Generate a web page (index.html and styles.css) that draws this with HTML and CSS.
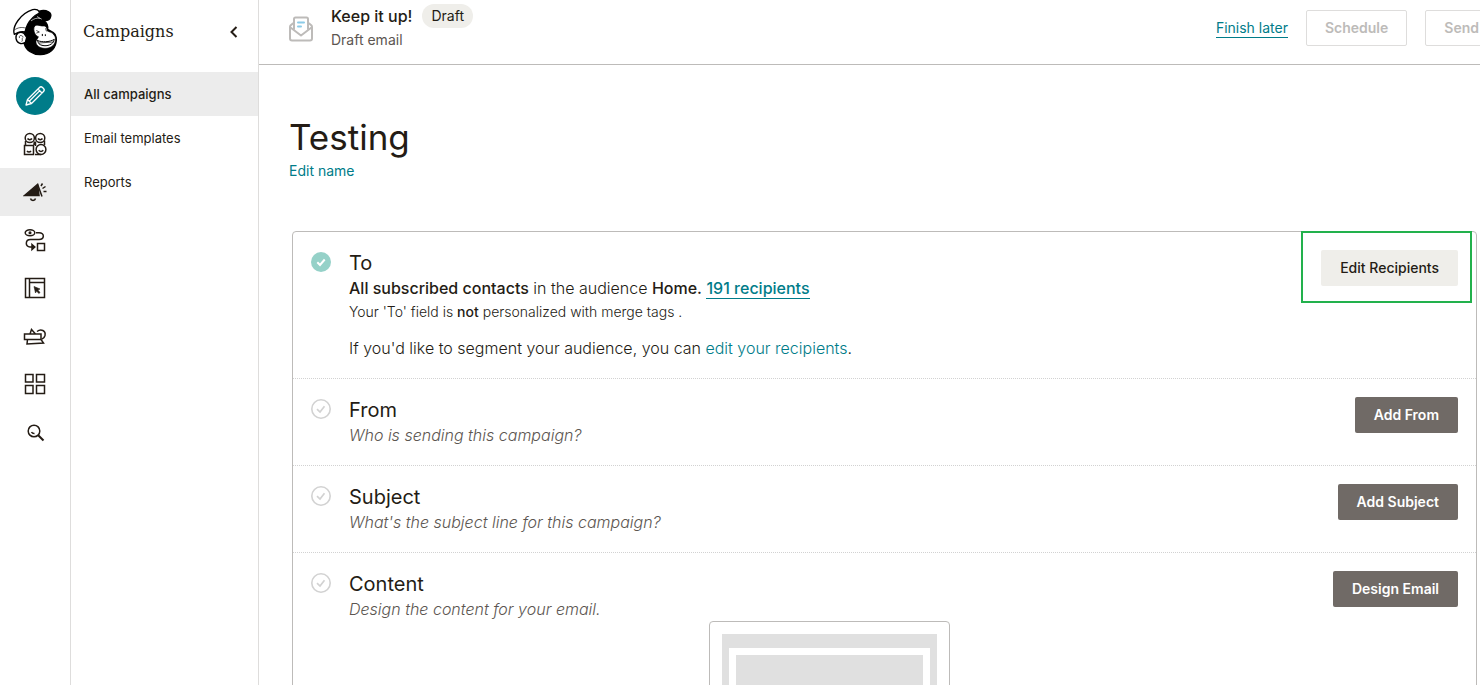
FILE: index.html
```html
<!DOCTYPE html>
<html lang="en">
<head>
<meta charset="utf-8">
<title>Campaigns</title>
<link rel="stylesheet" href="styles.css">
</head>
<body>
<div class="app">
  <nav class="rail" aria-label="Primary">
    <a class="rail-logo" href="#" aria-label="Home">
      <svg width="46" height="48" viewBox="36 24 138 144" fill="none" stroke="#000" stroke-width="4" stroke-linecap="round" stroke-linejoin="round">
        <path d="M72 92C78 76 92 60 104 54L134 64C142 70 144 80 143 88L160 98C170 104 170 120 168 128C164 150 146 163 122 164C98 165 78 150 73 132Z" fill="#000"/>
        <path d="M92 62C96 46 108 34 124 32C140 30 156 37 152 50C150 60 142 63 130 62C116 61 104 62 92 68Z" fill="#000"/>
        <path d="M43 103C35 80 62 40 98 29C109 26 118 31 118 39C104 46 91 58 83 73C79 81 77 88 75 96C62 93 52 97 43 103Z" fill="#fff"/>
        <path d="M43 90C54 82 64 81 77 84" stroke-width="2"/>
        <path d="M94 62C102 56 110 53 119 55M112 50L124 57" stroke="#fff" stroke-width="2"/>
        <path d="M103 79C110 71 122 79 130 78C138 76 141 84 142 93C146 96 158 96 161 104C167 108 168 119 165 127C160 142 142 148 126 144C114 141 107 133 108 124C110 117 114 116 115 110C106 108 98 92 103 79Z" fill="#fff" stroke-width="2"/>
        <path d="M113 122C126 127 148 127 163 118C160 134 142 140 126 136C118 134 114 130 113 122Z" stroke-width="3" fill="#fff"/>
        <path d="M110 92L118 96L110 99M137 86L139 93M117 129L160 126" stroke-width="2"/>
        <path d="M127 103V107M136 104V107" stroke-width="3"/>
        <path d="M72 100C60 92 46 100 48 115C50 129 64 135 76 127L80 112Z" fill="#fff"/>
        <path d="M70 111C64 103 56 106 58 113M67 114C65 118 69 121 66 124" stroke-width="2"/>
      </svg>
    </a>
    <a class="rail-item" href="#" aria-label="Create">
      <span class="create">
        <svg width="22" height="22" viewBox="0 0 22 22" fill="none" stroke="#fff" stroke-width="1.300" stroke-linejoin="round">
          <path d="M2 20L3.500 14.500L15.500 2.500C16.500 1.500 17.500 1.500 18.500 2.500L19.500 3.500C20.500 4.500 20.500 5.500 19.500 6.500L7.500 18.500ZM3.500 14.500L7.500 18.500M14 4L18 8M5.200 16.200L15.800 5.600"/>
        </svg>
      </span>
    </a>
    <a class="rail-item" href="#" aria-label="Audience">
      <svg class="icon" width="24" height="24" viewBox="0 0 24 24">
        <circle cx="6.800" cy="6" r="4.600"/><circle cx="17.200" cy="6" r="4.600"/><rect x="1.500" y="13.500" width="9" height="9"/><circle cx="18" cy="17.500" r="4.900"/>
        <path d="M4.500 6.500C5.500 8 8 8 9 6.500M15 6.500C16 8 18.500 8 19.500 6.500M4 19C5 20.300 7 20.300 8 19M15.700 18.300C17 19.800 19 19.800 20.300 18.300M2.500 9V13M11.500 9.500C11 11 11 11.500 11 13M12.500 9.500V14M21.500 8.500V13M12 22.500H18"/>
      </svg>
    </a>
    <a class="rail-item is-current" href="#" aria-label="Campaigns" aria-current="page">
      <svg class="icon" width="24" height="24" viewBox="0 0 24 24">
        <path d="M1.500 15.500L14.500 4.500L16 15.500Z" fill="#241c15"/><path d="M14.500 4L19 16.500M7.500 18.500C8 21 12 21 12.500 18.500M18 6L19.500 3.500M19.500 8.500L22.500 6.500M20.500 11.500H23.500"/>
      </svg>
    </a>
    <a class="rail-item" href="#" aria-label="Automations">
      <svg class="icon" width="24" height="24" viewBox="0 0 24 24">
        <ellipse cx="7" cy="4.700" rx="4.800" ry="3"/><circle cx="7" cy="4.700" r=".8"/><path d="M13 4.700H16C22 4.700 21.500 11.500 16 11.500H7.500C2 11.500 2 19 7 19H11"/><path d="M9 16.500L11.800 19L9 21.500Z" fill="#241c15"/><rect x="14.500" y="15.500" width="7" height="7"/>
      </svg>
    </a>
    <a class="rail-item" href="#" aria-label="Website">
      <svg class="icon" width="24" height="24" viewBox="0 0 24 24">
        <path d="M2.500 2.500H21.500V21.500H2.500ZM6.500 2.500V21.500M6.500 6.500H21.500"/><path d="M11 10.500L17 13L14.800 13.900L17 16.500L15.800 17.500L13.600 15L12.500 17Z" fill="#241c15" stroke-width=".6"/>
      </svg>
    </a>
    <a class="rail-item" href="#" aria-label="Content studio">
      <svg class="icon" width="24" height="24" viewBox="0 0 24 24">
        <path d="M1.500 10H18V15.500H1.500ZM4.500 15.500L4 20L20.500 19L18 15.500M7 10L8.500 5.500L12.500 10M14 7.500C18 4.500 23 6.500 22 11.500C21.500 13.500 20.500 14.500 19 15"/>
      </svg>
    </a>
    <a class="rail-item" href="#" aria-label="Integrations">
      <svg class="icon" width="24" height="24" viewBox="0 0 24 24">
        <path d="M2.500 2.500H10V10H2.500ZM13.500 2.500H21.500V10H13.500ZM2.500 13.500H10V21.500H2.500ZM13.500 13.500H21.500V21.500H13.500Z"/>
      </svg>
    </a>
    <a class="rail-item" href="#" aria-label="Search">
      <svg class="icon" width="24" height="24" viewBox="0 0 24 24">
        <circle cx="11" cy="11" r="5.800"/><path d="M15.200 15.200L20.500 20.500" stroke-width="2"/><path d="M8.500 12C9 13 10 13.600 11.500 13.500"/>
      </svg>
    </a>
  </nav>

  <aside class="subnav">
    <div class="subnav-head">
      <h2 class="subnav-title">Campaigns</h2>
      <button class="collapse" type="button" aria-label="Collapse">
        <svg width="8" height="12" viewBox="0 0 8 12" fill="none" stroke="#241c15" stroke-width="2"><path d="M6.500 1L1.500 6L6.500 11"/></svg>
      </button>
    </div>
    <a class="subnav-link is-current" href="#">All campaigns</a>
    <a class="subnav-link" href="#">Email templates</a>
    <a class="subnav-link" href="#">Reports</a>
  </aside>

  <main class="main">
    <header class="topbar">
      <svg class="mail" width="24" height="26" viewBox="0 0 24 26" fill="none" stroke="#bdbbb9" stroke-width="2" stroke-linejoin="round" stroke-linecap="round">
        <path d="M5 13V3C5 2 5.500 1.500 6.500 1.500H17.500C18.500 1.500 19 2 19 3V13M5 6.500L1.500 9.500C1 10 1 10.500 1 11V22.500C1 24 1.500 24.500 3 24.500H21C22.500 24.500 23 24 23 22.500V11C23 10.500 23 10 22.500 9.500L19 6.500M1.500 11.500L12 19.500L22.500 11.500"/>
        <path d="M9 6.500H15M9 10.500H12" stroke="#8ccbe8"/>
      </svg>
      <div class="summary">
        <div class="summary-line"><strong class="summary-title">Keep it up!</strong><span class="pill">Draft</span></div>
        <div class="summary-type">Draft email</div>
      </div>
      <div class="actions">
        <a class="finish" href="#">Finish later</a>
        <button class="btn btn-outline" type="button" disabled>Schedule</button>
        <button class="btn btn-outline" type="button" disabled>Send</button>
      </div>
    </header>

    <div class="content">
      <h1 class="page-title">Testing</h1>
      <a class="link edit-name" href="#">Edit name</a>

      <div class="card">
        <section class="step">
          <svg class="check" width="20" height="20" viewBox="0 0 20 20" fill="none"><circle cx="10" cy="10" r="10" fill="#95d1c8"/><path d="M6.300 10.300L9 13L13.700 7.500" stroke="#fff" stroke-width="2"/></svg>
          <div class="step-body">
            <h3 class="step-title">To</h3>
            <p class="text"><strong>All subscribed contacts</strong> in the audience <strong>Home.</strong> <a class="link recipients" href="#">191 recipients</a></p>
            <p class="note">Your 'To' field is <strong>not</strong> personalized with merge tags .</p>
            <p class="text segment">If you'd like to segment your audience, you can <a class="link" href="#">edit your recipients</a>.</p>
          </div>
          <div class="step-action highlight"><button class="btn btn-light" type="button">Edit Recipients</button></div>
        </section>
        <section class="step">
          <svg class="check" width="20" height="20" viewBox="0 0 20 20" fill="none" stroke="#d2d2d2"><circle cx="10" cy="10" r="9.200" stroke-width="1.600"/><path d="M6 10.200L9 13L13.500 7.200" stroke-width="1.700"/></svg>
          <div class="step-body">
            <h3 class="step-title">From</h3>
            <p class="text hint">Who is sending this campaign?</p>
          </div>
          <div class="step-action"><button class="btn btn-dark" type="button">Add From</button></div>
        </section>
        <section class="step">
          <svg class="check" width="20" height="20" viewBox="0 0 20 20" fill="none" stroke="#d2d2d2"><circle cx="10" cy="10" r="9.200" stroke-width="1.600"/><path d="M6 10.200L9 13L13.500 7.200" stroke-width="1.700"/></svg>
          <div class="step-body">
            <h3 class="step-title">Subject</h3>
            <p class="text hint">What's the subject line for this campaign?</p>
          </div>
          <div class="step-action"><button class="btn btn-dark" type="button">Add Subject</button></div>
        </section>
        <section class="step">
          <svg class="check" width="20" height="20" viewBox="0 0 20 20" fill="none" stroke="#d2d2d2"><circle cx="10" cy="10" r="9.200" stroke-width="1.600"/><path d="M6 10.200L9 13L13.500 7.200" stroke-width="1.700"/></svg>
          <div class="step-body">
            <h3 class="step-title">Content</h3>
            <p class="text hint">Design the content for your email.</p>
            <div class="preview"><div class="preview-page"><div class="preview-sheet"><div class="preview-block"></div></div></div></div>
          </div>
          <div class="step-action"><button class="btn btn-dark" type="button">Design Email</button></div>
        </section>
      </div>
    </div>
  </main>
</div>
</body>
</html>
```

FILE: styles.css
```css
* { box-sizing: border-box; }

body {
  margin: 0;
  color: #241c15;
  background: #fff;
  font-family: Inter, "Liberation Sans", sans-serif;
  font-size: 16px;
  font-weight: 300;
  line-height: 24px;
}

h1, h2, h3, p { margin: 0; font-weight: 400; }
strong { font-weight: 500; }
a { color: inherit; text-decoration: none; }
svg { display: block; }
button { font: inherit; cursor: pointer; }

.app {
  display: grid;
  grid-template-columns: 71px 188px minmax(0, 1fr);
  height: 100vh;
  overflow: hidden;
}

/* Icon rail */
.rail { border-right: 1px solid #dedddc; }
.rail-logo { display: block; height: 72px; padding: 8px 0 0 12px; }
.rail-item { display: grid; place-items: center; height: 48px; }
.is-current { background: #ececec; }
.create {
  display: grid;
  place-items: center;
  width: 38px;
  height: 38px;
  border-radius: 50%;
  background: #007c89;
}
.icon { fill: none; stroke: #241c15; stroke-width: 1.5; }

/* Section navigation */
.subnav { border-right: 1px solid #dedddc; }
.subnav-head {
  display: flex;
  align-items: center;
  justify-content: space-between;
  height: 72px;
  padding: 0 18px 8px 12px;
}
.subnav-title { font-family: "DejaVu Serif", serif; font-size: 16px; }
.collapse { padding: 2px; border: 0; background: none; }
.subnav-link {
  display: block;
  padding: 0 13px;
  font-size: 13px;
  font-weight: 400;
  line-height: 44px;
}
.subnav-link.is-current { font-weight: 500; }

/* Top bar */
.topbar {
  display: flex;
  align-items: flex-start;
  height: 65px;
  padding-left: 30px;
  border-bottom: 1px solid #bdbbb9;
  overflow: hidden;
}
.mail { margin-top: 16px; }
.summary { margin: 4px 0 0 18px; }
.summary-line { display: flex; gap: 10px; }
.pill {
  padding: 0 9px;
  border-radius: 12px;
  background: #efeeea;
  font-size: 14px;
  font-weight: 400;
}
.summary-type { color: #5c5651; font-size: 14px; font-weight: 400; }
.actions {
  display: flex;
  align-items: center;
  gap: 18px;
  margin: 10px -18px 0 auto;
}
.finish {
  color: #007c89;
  border-bottom: 1px solid #007c89;
  font-size: 14px;
  font-weight: 400;
  line-height: 18px;
}

.btn {
  height: 36px;
  padding: 0 18px;
  border: 1px solid transparent;
  border-radius: 2px;
  font-size: 14px;
  font-weight: 600;
  line-height: 20px;
  white-space: nowrap;
}
.btn-outline { border-color: #dedddc; background: #fff; color: #bdbbb9; }
.btn-light { background: #efeeea; color: #241c15; font-weight: 500; }
.btn-dark { background: #706a66; color: #fff; }

/* Campaign checklist */
.content { padding: 48px 3px 0 30px; }
.page-title { font-size: 35px; line-height: 48px; }
.link { color: #007c89; }
.edit-name { display: block; width: max-content; font-size: 14px; font-weight: 400; line-height: 20px; }
.card {
  margin: 50px 0 0 3px;
  border: 1px solid #bdbbb9;
  border-radius: 4px;
}
.step {
  display: grid;
  grid-template-columns: 38px minmax(0, 1fr) 148px;
  padding: 18px;
}
.step + .step { border-top: 1px dotted #d2d2d2; }
.check { margin-top: 2px; }
.step-title { font-size: 20px; line-height: 26px; }
.text, .note { font-weight: 300; }
.note { font-size: 14px; }
.segment { margin-top: 12px; }
.hint { color: #5c5651; font-style: italic; }
.recipients { border-bottom: 1px solid #007c89; font-weight: 500; }
.step-action { position: relative; justify-self: end; align-self: start; display: flex; }
.highlight::after {
  content: "";
  position: absolute;
  inset: -19px -14px -17px -20px;
  border: 2px solid #22b14c;
  pointer-events: none;
}

/* Email preview thumbnail */
.preview {
  width: 241px;
  margin: 0 auto;
  padding: 12px;
  border: 1px solid #bdbbb9;
  border-radius: 4px;
}
.preview-page { padding: 14px 7px; background: #e0e0e0; }
.preview-sheet { padding: 7px; background: #fff; }
.preview-block { height: 120px; background: #e0e0e0; }
```
